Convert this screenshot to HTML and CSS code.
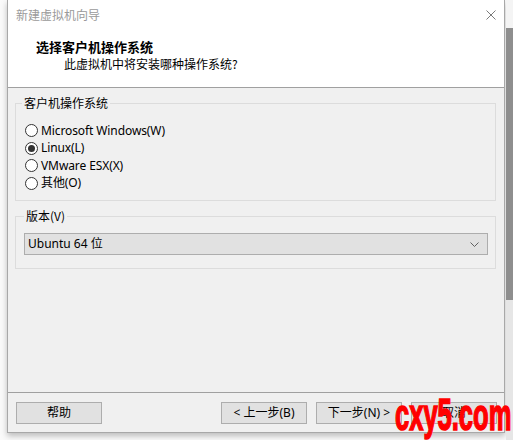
FILE: index.html
```html
<!DOCTYPE html>
<html lang="zh-CN">
<head>
<meta charset="utf-8">
<title>新建虚拟机向导</title>
<link rel="stylesheet" href="styles.css">
</head>
<body>
<div class="desktop">
  <div class="dialog">
    <div class="header">
      <div class="titlebar">
        <span class="title">新建虚拟机向导</span>
        <svg class="close" width="10" height="10" viewBox="0 0 10 10"><path d="M0.5 0.5 L9.5 9.5 M9.5 0.5 L0.5 9.5" stroke="#7a7a7a" stroke-width="1" fill="none"/></svg>
      </div>
      <div class="heading">选择客户机操作系统</div>
      <div class="subheading">此虚拟机中将安装哪种操作系统?</div>
    </div>
    <div class="body">
      <fieldset class="group os">
        <legend>客户机操作系统</legend>
        <div class="radio"><span class="circle"></span><span>Microsoft Windows(W)</span></div>
        <div class="radio checked"><span class="circle"></span><span>Linux(L)</span></div>
        <div class="radio"><span class="circle"></span><span>VMware ESX(X)</span></div>
        <div class="radio"><span class="circle"></span><span>其他(O)</span></div>
      </fieldset>
      <fieldset class="group version">
        <legend>版本(V)</legend>
        <div class="select">
          <span>Ubuntu 64 位</span>
          <svg class="chevron" width="9" height="5" viewBox="0 0 9 5"><path d="M0.5 0.5 L4.5 4.5 L8.5 0.5" stroke="#606060" stroke-width="1" fill="none"/></svg>
        </div>
      </fieldset>
    </div>
    <div class="footer">
      <div class="btn">帮助</div>
      <div class="spacer"></div>
      <div class="btn">&lt; 上一步(B)</div>
      <div class="btn">下一步(N) &gt;</div>
      <div class="btn">取消</div>
    </div>
  </div>
  <div class="side"></div>
  <div class="watermark">cxy5.com</div>
</div>
</body>
</html>
```

FILE: styles.css
```css
* { box-sizing: border-box; }
html, body { margin: 0; padding: 0; background: #ffffff; }
body {
  font-family: "Noto Sans", "Noto Sans CJK SC", sans-serif;
  font-size: 12px;
  color: #000;
}
.desktop {
  position: relative;
  width: 513px;
  height: 440px;
  display: flex;
  overflow: hidden;
  background: #fafafa;
}
.dialog {
  margin-left: 7px;
  width: 498px;
  height: 433px;
  display: flex;
  flex-direction: column;
  border: 1px solid #a8a8a8;
  border-top: none;
  background: #f0f0f0;
  box-shadow: 0 3px 6px rgba(0,0,0,0.25);
  flex: none;
}
.header {
  height: 88px;
  background: #ffffff;
  border-bottom: 1px solid #a0a0a0;
}
.titlebar {
  height: 30px;
  display: flex;
  align-items: center;
  justify-content: space-between;
  padding: 0 8px 0 8px;
}
.title {
  color: #9a9a9a;
  line-height: 16px;
  font-family: "Noto Sans CJK SC", sans-serif;
}
.close { display: block; margin-top: -1px; }
.heading {
  margin-top: 8px;
  padding-left: 28px;
  font-weight: bold;
  font-size: 13px;
  line-height: 18px;
  font-family: "Noto Sans CJK SC", sans-serif;
}
.subheading {
  padding-left: 56px;
  line-height: 16px;
  font-family: "Noto Sans CJK SC", sans-serif;
}
.body {
  flex: 1;
  padding-top: 7px;
}
.group {
  margin: 0 8px 0 7px;
  border: 1px solid #dcdcdc;
  min-width: 0;
}
.group legend {
  padding: 0 2px;
  line-height: 16px;
  font-family: "Noto Sans CJK SC", sans-serif;
}
.os { padding: 11px 7px 8px 6px; }
.version { margin-top: 7px; padding: 9px 7px 13px 8px; }
.radio {
  height: 17.5px;
  display: flex;
  align-items: center;
  line-height: 16px;
  letter-spacing: -0.1px;
}
.circle {
  width: 13px;
  height: 13px;
  margin-left: 3px;
  margin-right: 3px;
  border: 1px solid #333333;
  border-radius: 50%;
  background: #ffffff;
  display: flex;
  align-items: center;
  justify-content: center;
  flex: none;
}
.checked .circle::after {
  content: "";
  width: 7px;
  height: 7px;
  border-radius: 50%;
  background: #333333;
}
.select {
  height: 22px;
  border: 1px solid #adadad;
  background: #e1e1e1;
  display: flex;
  align-items: center;
  justify-content: space-between;
  padding: 0 8px 0 3px;
  line-height: 16px;
}
.chevron { display: block; }
.footer {
  height: 40px;
  border-top: 1px solid #a0a0a0;
  padding: 9px 7px 8px 8px;
  display: flex;
  gap: 9px;
}
.spacer { flex: 1; }
.btn {
  width: 86px;
  height: 22px;
  border: 1px solid #adadad;
  background: #e1e1e1;
  display: flex;
  align-items: center;
  justify-content: center;
  line-height: 16px;
  flex: none;
}
.side {
  flex: 1;
  margin-left: 1px;
  background: linear-gradient(#f4f4f4 0, #f4f4f4 28px, #8e8e8e 28px, #8e8e8e 300px, #e6e6e6 300px);
}
.watermark {
  position: absolute;
  left: 395px;
  top: 393px;
  color: #ff0000;
  font-family: "Liberation Sans", Arial, sans-serif;
  font-weight: bold;
  font-size: 44px;
  line-height: 44px;
  -webkit-text-stroke: 1.6px #ff0000;
  transform: scaleX(0.58);
  transform-origin: left top;
  letter-spacing: 0px;
}
```
